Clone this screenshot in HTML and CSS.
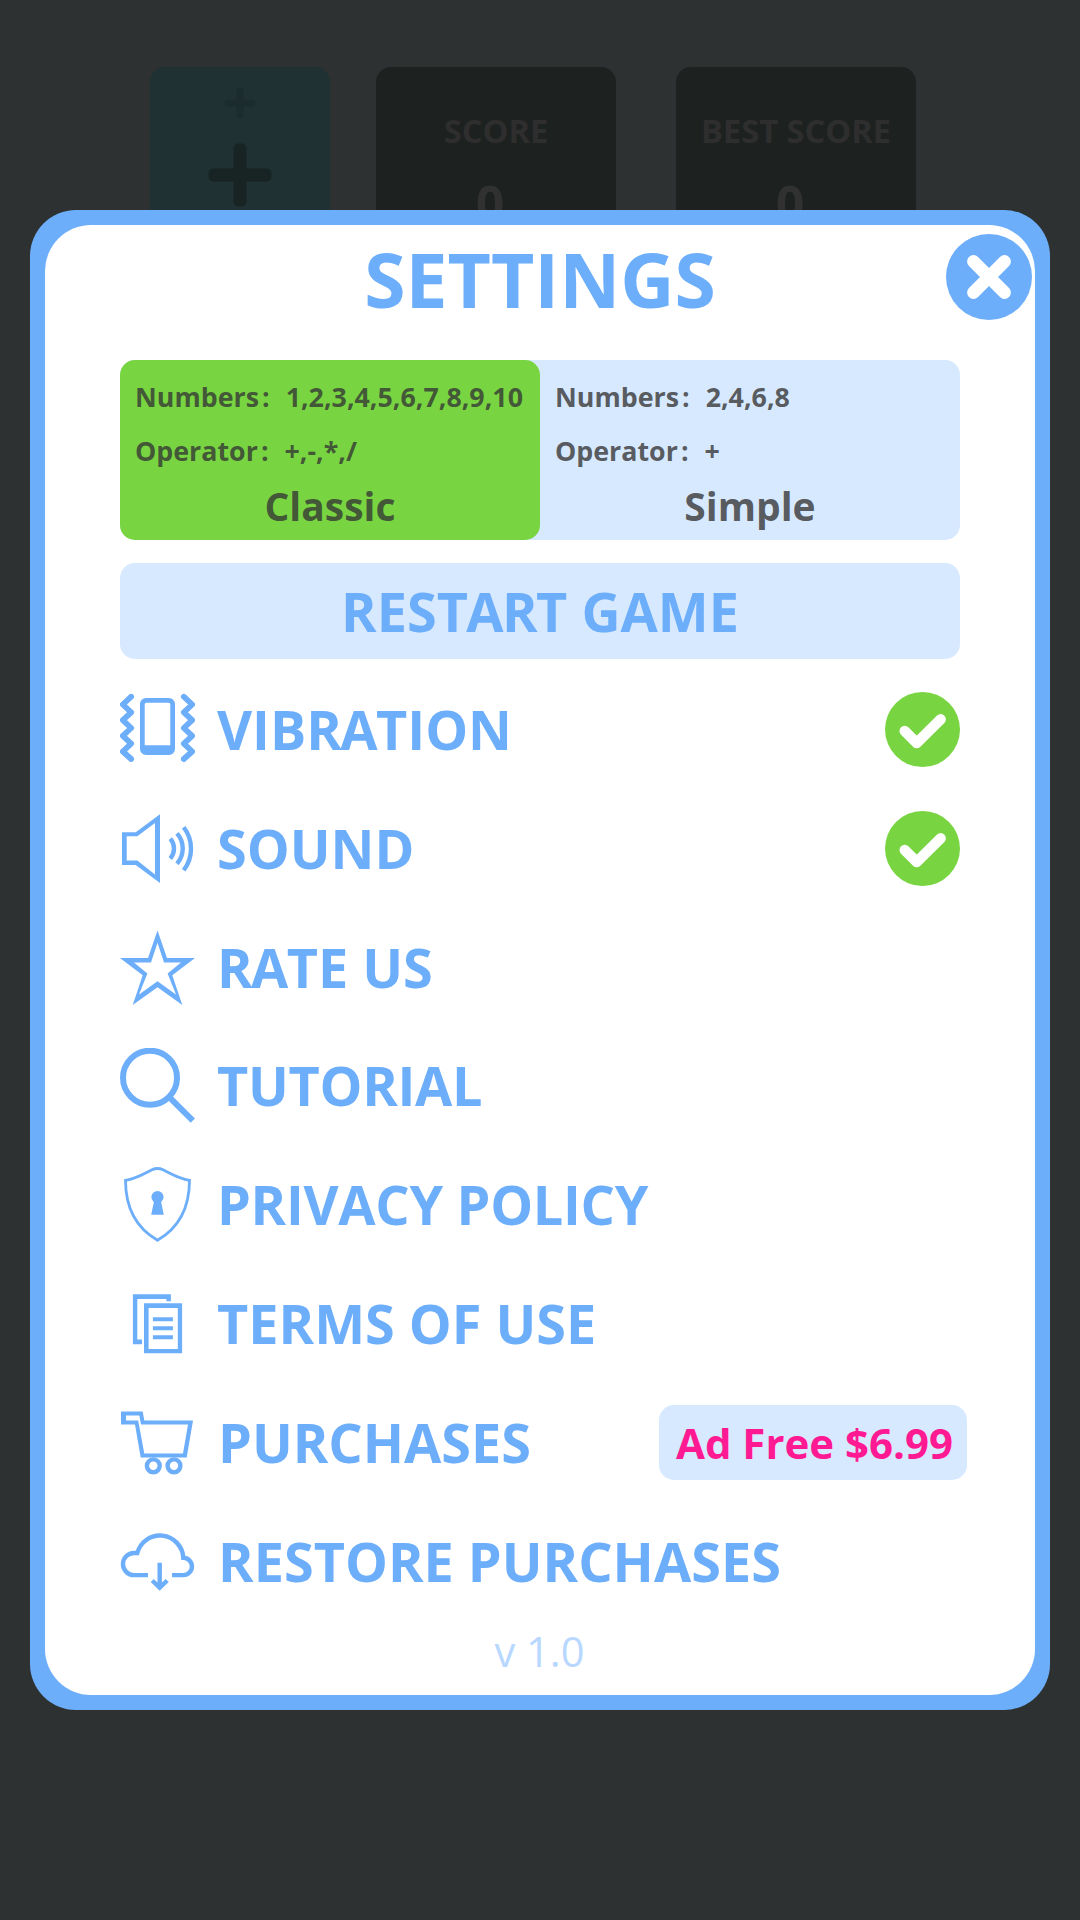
FILE: index.html
```html
<!DOCTYPE html>
<html lang="en">
<head>
<meta charset="utf-8">
<title>Settings</title>
<link rel="stylesheet" href="styles.css">
</head>
<body>
<div class="game">
  <div class="operator-card">
    <svg class="plus-small" viewBox="0 0 32 32"><path d="M16 3.8V28.2M3.8 16H28.2"/></svg>
    <svg class="plus-large" viewBox="0 0 64 64"><rect x="25.5" y="0.5" width="13" height="63" rx="5"/><rect x="0.5" y="25.5" width="63" height="13" rx="5"/></svg>
  </div>
  <div class="score-card"><span class="score-label">SCORE</span><span class="score-value">0</span></div>
  <div class="score-card best"><span class="score-label">BEST SCORE</span><span class="score-value">0</span></div>
</div>

<main class="panel">
  <button class="close" aria-label="Close"><svg viewBox="0 0 86 86"><path d="M27.5 27.5L58.5 58.5M58.5 27.5L27.5 58.5"/></svg></button>
  <h1 class="title">SETTINGS</h1>

  <div class="modes">
    <div class="mode selected">
      <div class="rule"><span class="rule-name">Numbers<span class="colon">:</span></span><span>1,2,3,4,5,6,7,8,9,10</span></div>
      <div class="rule"><span class="rule-name">Operator<span class="colon">:</span></span><span>+,-,*,/</span></div>
      <div class="mode-name">Classic</div>
    </div>
    <div class="mode">
      <div class="rule"><span class="rule-name">Numbers<span class="colon">:</span></span><span>2,4,6,8</span></div>
      <div class="rule"><span class="rule-name">Operator<span class="colon">:</span></span><span>+</span></div>
      <div class="mode-name">Simple</div>
    </div>
  </div>

  <button class="restart">RES<span class="kern">TAR</span>T GAME</button>

  <ul class="menu">
    <li class="item">
      <svg class="icon" viewBox="0 0 75 75"><path class="line zigzag" d="M11.2 4.7L2.8 12.5L11.2 20.3L2.8 28.2L11.2 36L2.8 43.8L11.2 51.6L2.8 59.5L11.2 67M63.8 4.7L72.2 12.5L63.8 20.3L72.2 28.2L63.8 36L72.2 43.8L63.8 51.6L72.2 59.5L63.8 67"/><path d="M26 6H49a6 6 0 0 1 6 6V57a6 6 0 0 1-6 6H26a6 6 0 0 1-6-6V12a6 6 0 0 1 6-6ZM26.2 10.7a1.5 1.5 0 0 0-1.5 1.5V53.2H50.3V12.2a1.5 1.5 0 0 0-1.5-1.5Z"/></svg>
      <span class="label">VIB<span class="kern">RA</span>TION</span>
      <svg class="check" viewBox="0 0 75 75"><circle cx="37.5" cy="37.5" r="37.5"/><path d="M19.7 39L31.7 51L55.7 27.3"/></svg>
    </li>
    <li class="item">
      <svg class="icon" viewBox="0 0 75 75"><path d="M2 21.25H15.7L40 3.25V71.9L15.7 53.9H2ZM6.7 25.25V49.6H17.3L35 63.6V11.9L17.3 25.25Z"/><path class="line" d="M50.3 27.6A15.4 15.4 0 0 1 50.3 47.6M57 22.4A23 23 0 0 1 57 52.8M63.7 16.25A35.3 35.3 0 0 1 63.7 59.25"/></svg>
      <span class="label">SOUND</span>
      <svg class="check" viewBox="0 0 75 75"><circle cx="37.5" cy="37.5" r="37.5"/><path d="M19.7 39L31.7 51L55.7 27.3"/></svg>
    </li>
    <li class="item">
      <svg class="icon" viewBox="0 0 75 75"><path d="M37.5 .5L47 28H75L52.3 45.3L62.3 75L37.5 57.2L12.7 75L22.7 45.3L0 28H28ZM37.5 12.8L31 32.5H14L27.4 43.5L19 64.5L37.5 51.2L56 64.5L47.6 43.5L61 32.5H44Z"/></svg>
      <span class="label"><span class="kern">RA</span>TE US</span>
    </li>
    <li class="item">
      <svg class="icon" viewBox="0 0 75 75"><circle class="line lens" cx="30" cy="29.7" r="27"/><path class="line lens" d="M49.5 49.3L72.8 72.6"/></svg>
      <span class="label tight">TUTORIAL</span>
    </li>
    <li class="item">
      <svg class="icon" viewBox="0 0 75 75"><path class="line thin" d="M5.5 13.3C17 11.5 26 5.5 32 2.8Q37.5 .2 43 2.8C49 5.5 58 11.5 69.5 13.3C69.5 42 57 62 37.5 73.3C18 62 5.5 42 5.5 13.3Z"/><circle cx="37.5" cy="30" r="6.1"/><path d="M34.3 33H40.7L43.8 47.7H31.2Z"/></svg>
      <span class="label tight">PRIVACY POLICY</span>
    </li>
    <li class="item">
      <svg class="icon" viewBox="0 0 75 75"><path d="M12.9 8.25H50.9V15.2H46.4V13H17.3V53.6H22V58.25H12.9ZM24 17.25H62.1V67.25H24ZM28.6 22V63H57.8V22ZM32.9 31.25H52.9V35.25H32.9ZM32.9 40.25H52.9V44.25H32.9ZM32.9 49.25H52.9V53.25H32.9Z"/></svg>
      <span class="label">TERMS OF USE</span>
    </li>
    <li class="item">
      <svg class="icon" viewBox="0 0 75 75"><path d="M1 6.5H22.7L24.3 15.5H73L66.7 52.5H20.7L15 19.5H1ZM6 10.5V15.5H18.2L24.3 48.5H63L68 19.5H21L19.3 10.5Z"/><circle class="line" cx="33.3" cy="60.8" r="6.4"/><circle class="line" cx="54" cy="60.8" r="6.4"/></svg>
      <span class="label store">PURCHASES</span>
      <button class="offer">Ad Free $6.99</button>
    </li>
    <li class="item">
      <svg class="icon" viewBox="0 0 75 75"><path class="line" d="M28 51.1H14A11 11 0 0 1 14 29H17.3A23.4 23.4 0 0 1 63.3 33.8A8.65 8.65 0 0 1 63.3 51.1H52M39.7 38.75V62M32.2 56.5L39.7 63.7L47.2 56.5"/></svg>
      <span class="label store">RESTORE PURCHASES</span>
    </li>
  </ul>

  <p class="version">v 1.0</p>
</main>
</body>
</html>
```
FILE: styles.css
```css
* { box-sizing: border-box; }

body {
  margin: 0;
  height: 1920px;
  overflow: hidden;
  background: #2d3131;
  font-family: "Open Sans", "Noto Sans", sans-serif;
  font-weight: 700;
}

button {
  padding: 0;
  border: 0;
  font: inherit;
}

.game {
  display: flex;
  padding: 67px 0 0 150px;
}

.operator-card {
  display: flex;
  flex-direction: column;
  align-items: center;
  width: 180px;
  height: 240px;
  padding-top: 20px;
  margin-right: 46px;
  border-radius: 15px;
  background: #1f3132;
}

.plus-small {
  width: 32px;
  height: 32px;
  fill: none;
  stroke: #1c2b2d;
  stroke-width: 6.5;
  stroke-linecap: round;
}

.plus-large {
  width: 64px;
  height: 64px;
  margin-top: 24px;
  fill: #182323;
}

.score-card {
  display: flex;
  flex-direction: column;
  align-items: center;
  width: 240px;
  height: 240px;
  padding-top: 42px;
  border-radius: 15px;
  background: #1d2120;
  color: #2f2e2e;
}

.score-card.best { margin-left: 60px; }

.score-label {
  font-size: 32.6px;
  line-height: 44px;
}

.score-value {
  margin: 16px 12px 0 0;
  color: #323131;
  font-size: 50px;
  line-height: 68px;
}

.panel {
  position: absolute;
  top: 210px;
  left: 30px;
  width: 1020px;
  height: 1500px;
  padding: 15px 90px;
  border-radius: 46px;
  background: #6daefa;
  color: #6daefa;
}

.panel::before {
  content: "";
  position: absolute;
  inset: 15px;
  border-radius: 46px;
  background: #fff;
}

.panel > * { position: relative; }

.panel > .close {
  position: absolute;
  top: 24px;
  right: 18.5px;
  width: 86px;
  height: 86px;
  border-radius: 50%;
  background: #6daefa;
}

.close svg {
  display: block;
  fill: none;
  stroke: #fff;
  stroke-width: 12.8;
  stroke-linecap: round;
}

.title {
  margin: 0;
  font-size: 75px;
  line-height: 108px;
  text-align: center;
}

.modes {
  display: flex;
  height: 180px;
  margin-top: 27px;
  border-radius: 15px;
  background: #d7e9ff;
}

.mode {
  flex: 1 1 0;
  min-width: 0;
  padding: 10px 15px 0;
  border-radius: 15px;
  color: rgba(53, 53, 53, 0.8);
}

.mode.selected { background: #78d541; }

.rule {
  display: flex;
  gap: 16px;
  font-size: 26.8px;
  line-height: 54px;
  white-space: nowrap;
}

.colon { margin-left: 3px; }

.mode-name {
  font-size: 39px;
  line-height: 56px;
  text-align: center;
}

.restart {
  display: block;
  width: 840px;
  height: 96px;
  margin-top: 23px;
  padding-bottom: 1px;
  border-radius: 15px;
  background: #d7e9ff;
  color: #6daefa;
  font-size: 54px;
}

.kern { letter-spacing: -1.6px; }

.menu {
  margin: 11px 0 0;
  padding: 0;
  list-style: none;
}

.item {
  display: flex;
  align-items: center;
  height: 118.85px;
}

.icon, .check {
  flex: none;
  width: 75px;
  height: 75px;
}

.icon {
  margin-right: 22px;
  fill: #6daefa;
  fill-rule: evenodd;
}

.icon .line {
  fill: none;
  stroke: #6daefa;
  stroke-width: 4.4;
}

.icon .zigzag {
  stroke-width: 5.7;
  stroke-linecap: round;
  stroke-linejoin: round;
}

.icon .lens { stroke-width: 6; }
.icon .thin { stroke-width: 2.8; }

.label {
  font-size: 54px;
  line-height: 75px;
  white-space: nowrap;
}

.label.tight { letter-spacing: -0.3px; }
.label.store { padding-left: 1px; }

.check {
  margin-left: auto;
  fill: #78d541;
}

.check path {
  fill: none;
  stroke: #fff;
  stroke-width: 10.4;
  stroke-linecap: round;
  stroke-linejoin: round;
}

.offer {
  width: 308px;
  height: 75px;
  margin: 0 -7px 0 auto;
  padding-left: 3px;
  border-radius: 15px;
  background: #d7e9ff;
  color: #ff1a93;
  font-size: 42px;
}

.version {
  margin: 0;
  padding-right: 1px;
  color: #b8d8ff;
  font-size: 41.6px;
  font-weight: 400;
  line-height: 60px;
  text-align: center;
}
```
